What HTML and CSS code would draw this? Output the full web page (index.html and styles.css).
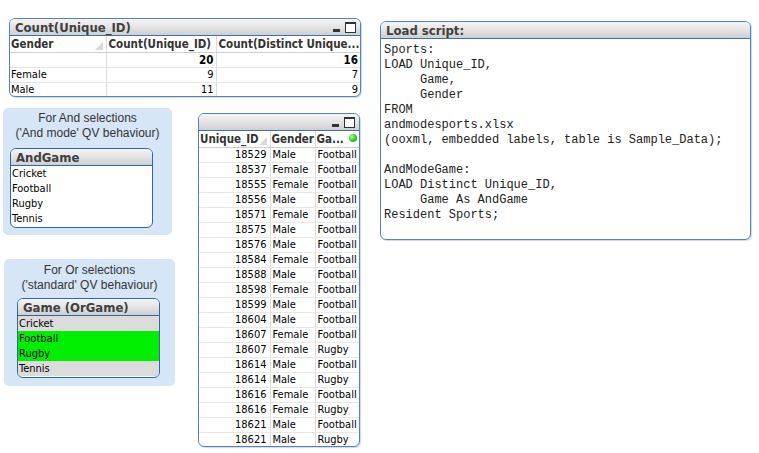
FILE: index.html
```html
<!DOCTYPE html>
<html>
<head>
<meta charset="utf-8">
<link rel="stylesheet" href="styles.css">
</head>
<body>
<div class="sheet">

  <div class="obj tbl1">
    <div class="cap">
      <span class="cap-t">Count(Unique_ID)</span>
      <span class="icons"><span class="ic-min"></span><span class="ic-max"></span></span>
    </div>
    <table class="grid g1">
      <colgroup><col style="width:96px"><col style="width:110px"><col></colgroup>
      <tr class="hd">
        <td>Gender<span class="sort"></span></td>
        <td>Count(Unique_ID)</td>
        <td>Count(Distinct Unique...</td>
      </tr>
      <tr class="tot"><td></td><td class="num">20</td><td class="num">16</td></tr>
      <tr><td>Female</td><td class="num">9</td><td class="num">7</td></tr>
      <tr><td>Male</td><td class="num">11</td><td class="num">9</td></tr>
    </table>
  </div>

  <div class="obj script">
    <div class="cap"><span class="cap-t">Load script:</span></div>
    <pre class="code">Sports:
LOAD Unique_ID,
     Game,
     Gender
FROM
andmodesports.xlsx
(ooxml, embedded labels, table is Sample_Data);

AndModeGame:
LOAD Distinct Unique_ID,
     Game As AndGame
Resident Sports;</pre>
  </div>

  <div class="panel and">
    <div class="ptxt">For And selections<br>('And mode' QV behaviour)</div>
    <div class="lb">
      <div class="cap lbcap"><span class="cap-t">AndGame</span></div>
      <div class="it">Cricket</div>
      <div class="it">Football</div>
      <div class="it">Rugby</div>
      <div class="it">Tennis</div>
    </div>
  </div>

  <div class="panel or">
    <div class="ptxt">For Or selections<br>('standard' QV behaviour)</div>
    <div class="lb">
      <div class="cap lbcap"><span class="cap-t">Game (OrGame)</span></div>
      <div class="it ex">Cricket</div>
      <div class="it sel">Football</div>
      <div class="it sel">Rugby</div>
      <div class="it ex">Tennis</div>
    </div>
  </div>

  <div class="obj tbl2">
    <div class="cap">
      <span class="cap-t"></span>
      <span class="icons"><span class="ic-min"></span><span class="ic-max"></span></span>
    </div>
    <table class="grid g2">
      <colgroup><col style="width:71px"><col style="width:45px"><col></colgroup>
      <tr class="hd"><td>Unique_ID<span class="sort"></span></td><td>Gender</td><td>Ga...<span class="dot"></span></td></tr>
      <tr><td class="num">18529</td><td>Male</td><td>Football</td></tr>
      <tr><td class="num">18537</td><td>Female</td><td>Football</td></tr>
      <tr><td class="num">18555</td><td>Female</td><td>Football</td></tr>
      <tr><td class="num">18556</td><td>Male</td><td>Football</td></tr>
      <tr><td class="num">18571</td><td>Female</td><td>Football</td></tr>
      <tr><td class="num">18575</td><td>Male</td><td>Football</td></tr>
      <tr><td class="num">18576</td><td>Male</td><td>Football</td></tr>
      <tr><td class="num">18584</td><td>Female</td><td>Football</td></tr>
      <tr><td class="num">18588</td><td>Male</td><td>Football</td></tr>
      <tr><td class="num">18598</td><td>Female</td><td>Football</td></tr>
      <tr><td class="num">18599</td><td>Male</td><td>Football</td></tr>
      <tr><td class="num">18604</td><td>Male</td><td>Football</td></tr>
      <tr><td class="num">18607</td><td>Female</td><td>Football</td></tr>
      <tr><td class="num">18607</td><td>Female</td><td>Rugby</td></tr>
      <tr><td class="num">18614</td><td>Male</td><td>Football</td></tr>
      <tr><td class="num">18614</td><td>Male</td><td>Rugby</td></tr>
      <tr><td class="num">18616</td><td>Female</td><td>Football</td></tr>
      <tr><td class="num">18616</td><td>Female</td><td>Rugby</td></tr>
      <tr><td class="num">18621</td><td>Male</td><td>Football</td></tr>
      <tr><td class="num">18621</td><td>Male</td><td>Rugby</td></tr>
    </table>
  </div>

</div>
</body>
</html>
```

FILE: styles.css
```css
html, body {
  margin: 0;
  padding: 0;
  background: #ffffff;
}
.sheet {
  position: relative;
  width: 759px;
  height: 453px;
  overflow: hidden;
  font-family: "DejaVu Sans Condensed", "DejaVu Sans", sans-serif;
  font-size: 11px;
  color: #000;
}
.obj {
  position: absolute;
  box-sizing: border-box;
  border: 1px solid #4f86c0;
  border-radius: 6px;
  background: #fff;
  overflow: hidden;
  box-shadow: 1px 1px 1px rgba(120,140,170,0.35);
}
.cap {
  height: 16px;
  display: flex;
  align-items: center;
  justify-content: space-between;
  background: linear-gradient(#f4f4f4 0%, #e6e6e6 45%, #cfcfcf 100%);
  border-bottom: 1px solid #3a73b3;
  padding: 0 4px 0 5px;
}
.cap-t {
  font-family: "DejaVu Sans Condensed", "DejaVu Sans", sans-serif;
  font-weight: bold;
  font-size: 13px;
  color: #404040;
  white-space: nowrap;
}
.icons {
  display: flex;
  align-items: center;
  gap: 5px;
}
.ic-min {
  width: 7px;
  height: 3px;
  background: #333;
  margin-top: 6px;
}
.ic-max {
  width: 9px;
  height: 8px;
  border: 1px solid #333;
  border-top-width: 2px;
  background: #fff;
}
.tbl1 { left: 9px; top: 18px; width: 352px; height: 79px; }
.tbl2 { left: 198px; top: 113px; width: 162px; height: 334px; }
.script { left: 380px; top: 21px; width: 371px; height: 219px; }

.grid {
  border-collapse: collapse;
  table-layout: fixed;
  width: 100%;
  font-size: 11px;
  font-family: "DejaVu Sans Condensed", "DejaVu Sans", sans-serif;
}
.grid td {
  height: 15px;
  padding: 0 2px 0 2px;
  border-right: 1px solid #dcdcdc;
  border-bottom: 1px solid #e4e4e4;
  white-space: nowrap;
  overflow: hidden;
  line-height: 14px;
  box-sizing: border-box;
  position: relative;
}
.grid td:last-child { border-right: none; }
.grid .hd td {
  font-weight: bold;
  font-size: 11.5px;
  color: #333;
  height: 16px;
  border-bottom: 1px solid #cfcfcf;
}
.g1 td:first-child { padding-left: 1px; }
.num { text-align: right; }
.tot td { font-weight: bold; font-size: 11.5px; }
.g2 td { border-bottom: 1px solid #e8e8e8; }
.g2 .hd td { padding-left: 1px; font-size: 11.5px; }
.g2 td.num { padding-right: 3px; }
.sort {
  position: absolute;
  right: 3px;
  bottom: 2px;
  width: 0;
  height: 0;
  border-left: 8px solid transparent;
  border-bottom: 8px solid #d8d8d8;
}
.dot {
  position: absolute;
  right: 2px;
  top: 3px;
  width: 8px;
  height: 8px;
  border-radius: 50%;
  background: radial-gradient(circle at 35% 35%, #b8ff9c 0%, #2fcc1a 55%, #129a0a 100%);
}

.code {
  margin: 0;
  padding: 4px 0 0 3px;
  font-family: "Liberation Mono", monospace;
  font-size: 12px;
  line-height: 15px;
  color: #222;
}

.panel {
  position: absolute;
  box-sizing: border-box;
  background: #d6e6f6;
  border-radius: 5px;
}
.panel.and { left: 3px; top: 108px; width: 169px; height: 127px; padding: 3px 0 0 7px; }
.panel.or { left: 4px; top: 259px; width: 171px; height: 127px; padding: 4px 0 0 13px; }
.ptxt {
  text-align: center;
  font-family: "Liberation Sans", Arial, sans-serif;
  font-size: 12px;
  line-height: 15px;
  color: #333;
  white-space: nowrap;
}
.panel.and .ptxt { width: 169px; margin-left: -7px; }
.panel.or .ptxt { width: 171px; margin-left: -13px; }
.lb {
  width: 143px;
  height: 80px;
  box-sizing: border-box;
  border: 1px solid #2c68a8;
  border-radius: 6px;
  background: #fff;
  overflow: hidden;
}
.panel.and .lb { margin-top: 7px; }
.panel.or .lb { margin-top: 5px; }
.lbcap { padding-left: 5px; border-bottom: 1px solid #2c68a8; }
.it {
  height: 15px;
  line-height: 15px;
  padding-left: 1px;
  font-family: "DejaVu Sans Condensed", "DejaVu Sans", sans-serif;
  font-size: 11px;
}
.it.ex { background: #dcdcdc; }
.it.sel { background: #00ee00; }
```
